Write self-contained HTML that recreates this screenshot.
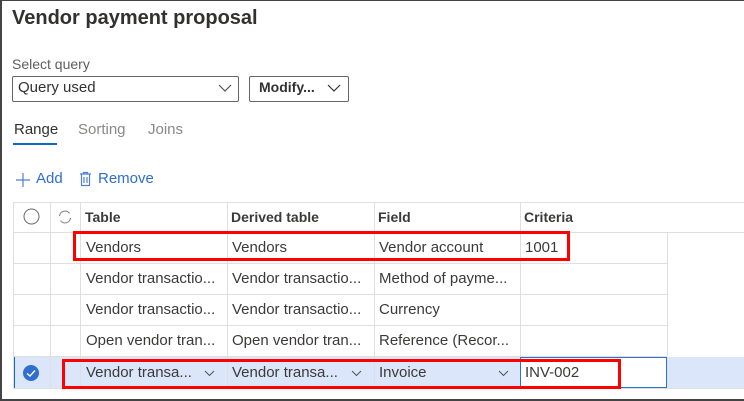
<!DOCTYPE html>
<html><head><style>
*{box-sizing:border-box;margin:0;padding:0}
body{width:744px;height:401px;overflow:hidden;background:#fff;font-family:"Liberation Sans",sans-serif;position:relative;color:#323130}
.frame{position:absolute;left:0;top:0;width:744px;height:401px;border:2px solid #444;border-right:none;border-top:1px solid #444}
.abs{position:absolute;white-space:nowrap}
.hl{position:absolute;height:1px;background:#e1dfdd}
.vl{position:absolute;width:1px;background:#e1dfdd}
.cell{position:absolute;font-size:15px;color:#3b3a39;white-space:nowrap}
.hd{font-size:14px;font-weight:bold;top:209px}
.red{position:absolute;border:3px solid #f00}
.chev{position:absolute}
</style></head><body>
<div class="frame"></div>
<div class="abs" style="left:12px;top:7px;font-size:20px;font-weight:bold;color:#323130">Vendor payment proposal</div>
<div class="abs" style="left:12px;top:56px;font-size:14px;color:#605e5c">Select query</div>
<div class="abs" style="left:12px;top:76px;width:227px;height:26px;border:1px solid #666;border-radius:2px"></div>
<div class="abs" style="left:18px;top:79px;font-size:15px;color:#323130">Query used</div>
<svg class="chev" style="left:218px;top:84px" width="14" height="9"><path d="M1 1 L7 7 L13 1" fill="none" stroke="#555" stroke-width="1.2"/></svg>
<div class="abs" style="left:249px;top:76px;width:100px;height:26px;border:1px solid #666;border-radius:2px"></div>
<div class="abs" style="left:259px;top:79px;font-size:14px;font-weight:bold;color:#323130">Modify...</div>
<svg class="chev" style="left:327px;top:84px" width="14" height="9"><path d="M1 1 L7 7 L13 1" fill="none" stroke="#333" stroke-width="1.2"/></svg>
<div class="abs" style="left:14px;top:121px;font-size:15px;color:#323130">Range</div>
<div class="abs" style="left:13px;top:143px;width:44px;height:2px;background:#0f6cbd"></div>
<div class="abs" style="left:78px;top:121px;font-size:15px;color:#8a8886">Sorting</div>
<div class="abs" style="left:148px;top:121px;font-size:15px;color:#8a8886">Joins</div>
<svg class="abs" style="left:15px;top:172px" width="16" height="16"><path d="M8 1V15M1 8H15" stroke="#4f7fd6" stroke-width="1.2"/></svg>
<div class="abs" style="left:36px;top:170px;font-size:15px;color:#2f6fd0">Add</div>
<svg class="abs" style="left:79px;top:171px" width="13" height="16"><path d="M1 3H12M4.5 3V1.5H8.5V3M2.5 3V14.5H10.5V3M5 6V12M8 6V12" fill="none" stroke="#4f7fd6" stroke-width="1.2"/></svg>
<div class="abs" style="left:98px;top:170px;font-size:15px;color:#2f6fd0">Remove</div>

<div class="hl" style="left:13px;top:202px;width:731px"></div>
<div class="hl" style="left:13px;top:232px;width:731px"></div>
<div class="hl" style="left:13px;top:263px;width:654px"></div>
<div class="hl" style="left:13px;top:294px;width:654px"></div>
<div class="hl" style="left:13px;top:325px;width:654px"></div>
<div class="hl" style="left:13px;top:356px;width:654px"></div>
<div class="abs" style="left:13px;top:357px;width:731px;height:31px;background:#dce6fa"></div>
<div class="abs" style="left:13px;top:357px;width:2px;height:31px;background:#0f6cbd"></div>
<div class="vl" style="left:13px;top:202px;height:186px"></div>
<div class="vl" style="left:50px;top:202px;height:186px"></div>
<div class="vl" style="left:80px;top:202px;height:186px"></div>
<div class="vl" style="left:227px;top:202px;height:186px"></div>
<div class="vl" style="left:374px;top:202px;height:186px"></div>
<div class="vl" style="left:520px;top:202px;height:186px"></div>
<div class="vl" style="left:667px;top:232px;height:124px"></div>
<div class="abs" style="left:520px;top:357px;width:147px;height:31px;background:#fff;border:1px solid #2f6fd0"></div>
<div class="hl" style="left:13px;top:388px;width:731px"></div>

<svg class="abs" style="left:23px;top:208px" width="17" height="17"><circle cx="8.5" cy="8.5" r="7.5" fill="none" stroke="#666" stroke-width="1"/></svg>
<svg class="abs" style="left:57px;top:209px" width="16" height="16"><path d="M2.5 7A5.5 5.5 0 0 1 12.5 4.5M13.5 9A5.5 5.5 0 0 1 3.5 11.5" fill="none" stroke="#888" stroke-width="1.1"/></svg>
<svg class="abs" style="left:22px;top:364px" width="18" height="18"><circle cx="9" cy="9" r="8" fill="#2f6fd0"/><path d="M5 9.5L8 12L13 6.5" fill="none" stroke="#fff" stroke-width="1.4"/></svg>

<div class="cell hd" style="left:85px">Table</div>
<div class="cell hd" style="left:231px">Derived table</div>
<div class="cell hd" style="left:378px">Field</div>
<div class="cell hd" style="left:524px">Criteria</div>

<div class="cell" style="left:86px;top:239px">Vendors</div>
<div class="cell" style="left:232px;top:239px">Vendors</div>
<div class="cell" style="left:379px;top:239px">Vendor account</div>
<div class="cell" style="left:525px;top:239px">1001</div>

<div class="cell" style="left:86px;top:270px">Vendor transactio...</div>
<div class="cell" style="left:232px;top:270px">Vendor transactio...</div>
<div class="cell" style="left:379px;top:270px">Method of payme...</div>

<div class="cell" style="left:86px;top:301px">Vendor transactio...</div>
<div class="cell" style="left:232px;top:301px">Vendor transactio...</div>
<div class="cell" style="left:379px;top:301px">Currency</div>

<div class="cell" style="left:86px;top:332px">Open vendor tran...</div>
<div class="cell" style="left:232px;top:332px">Open vendor tran...</div>
<div class="cell" style="left:379px;top:332px">Reference (Recor...</div>

<div class="cell" style="left:86px;top:364px">Vendor transa...</div>
<svg class="chev" style="left:204px;top:370px" width="11" height="7"><path d="M1 1L5.5 5.5L10 1" fill="none" stroke="#555" stroke-width="1"/></svg>
<div class="cell" style="left:232px;top:364px">Vendor transa...</div>
<svg class="chev" style="left:351px;top:370px" width="11" height="7"><path d="M1 1L5.5 5.5L10 1" fill="none" stroke="#555" stroke-width="1"/></svg>
<div class="cell" style="left:379px;top:364px">Invoice</div>
<svg class="chev" style="left:498px;top:370px" width="11" height="7"><path d="M1 1L5.5 5.5L10 1" fill="none" stroke="#555" stroke-width="1"/></svg>
<div class="cell" style="left:525px;top:364px">INV-002</div>

<div class="red" style="left:73px;top:231px;width:497px;height:30px"></div>
<div class="red" style="left:62px;top:359px;width:559px;height:30px"></div>
</body></html>
